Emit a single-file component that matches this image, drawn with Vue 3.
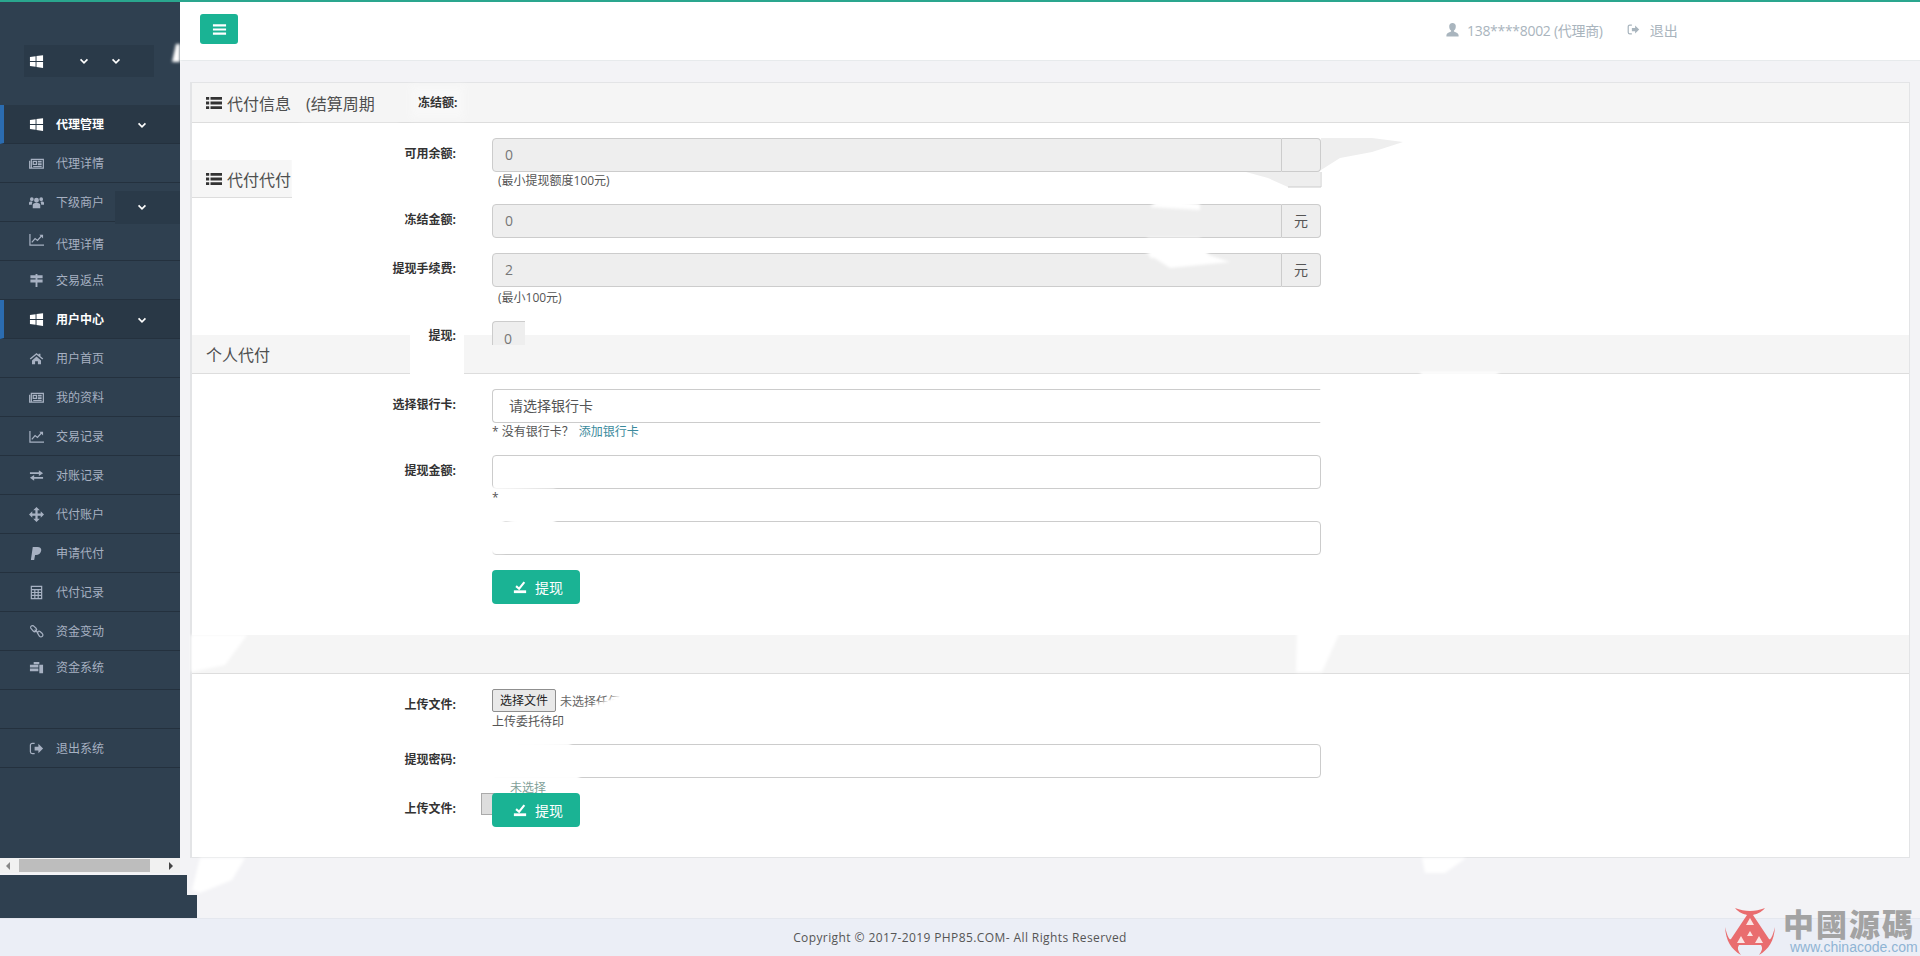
<script setup>
const icons = {
  windows: { f: 'M1 3.2 7 2.3V7.5H1Z M8 2.2 15 1.2V7.5H8Z M1 8.5H7V13.7L1 12.8Z M8 8.5H15V14.8L8 13.8Z' },
  news: { s: 'M2.5 3.5H15.3V13H2.5Z M.7 5V13H2.5 M4.5 5.7H8V9H4.5Z M9.5 5.7H13.5M9.5 7.5H13.5M9.5 9.3H13.5M4.5 11.2H13.5' },
  users: { f: 'M8 3a2.6 2.6 0 1 1 0 5.2A2.6 2.6 0 0 1 8 3Z M3 2.5a2 2 0 1 1 0 4 2 2 0 0 1 0-4Z M13 2.5a2 2 0 1 1 0 4 2 2 0 0 1 0-4Z M4 14V10.5C4 9 5.5 8.5 8 8.5s4 .5 4 2V14Z M0 10.5V8.5C0 7.5 1 7 3 7l.8.4C3.2 8 3 9.3 3 10.5Z M16 10.5V8.5C16 7.5 15 7 13 7l-.8.4c.6.6.8 1.9.8 3.1Z' },
  chart: { s: 'M1 2V14H16 M3 11 6.5 7 9 9 14 3.5', f: 'M11 3H15V7Z' },
  signs: { f: 'M7 1h2v1.5h5.5v3H9V7h5.5v3H9v5H7v-5H1.5V7H7V5.5H1.5v-3H7Z' },
  home: { f: 'M8 2 .8 8l1 1.1L8 4l6.2 5.1 1-1.1-3-2.5V3h-2v.9Z M3.2 10 8 5.8l4.8 4.2v4H9.5v-3h-3v3H3.2Z' },
  swap: { f: 'M1 4.5h9.5v-2L15 5.5l-4.5 3v-2H1Z M15 9.5H5.5v-2L1 10.5l4.5 3v-2H15Z' },
  arrows: { f: 'M8 0 11.5 3.5H9.2V6.800H12.5V4.5L16 8l-3.5 3.5V9.200H9.2V12.5H11.5L8 16 4.5 12.5H6.800V9.200H3.5V11.5L0 8l3.5-3.5V6.800H6.800V3.5H4.5Z' },
  paypal: { f: 'M4 1h5c3 0 4.5 1.5 4 4-.5 3-3 4.5-5.5 4.5H6.5L5.5 15H2Z' },
  calc: { s: 'M2.5 1.5h11v13h-11Z M2.5 5h11 M2.5 8h11 M2.5 11h11 M6.2 5v9 M9.8 5v9' },
  link: { s: 'M1.800 4.300a2 2 0 0 1 3-2.300l2.700 2.500a2 2 0 0 1-3 3Z M8.800 9.300a2 2 0 0 1 3-1.300l2.400 2.200a2 2 0 0 1-3 3Z M6 6l4 4' },
  bank: { f: 'M5 2h6v2.500H5Z M1 5h9v3H1Z M1 9h9v3H1Z M11 5h4v9h-4Z' },
  out: { s: 'M6 2.5H3.5a2 2 0 0 0-2 2v7a2 2 0 0 0 2 2H6', f: 'M6 6h4V3l5 5-5 5v-3H6Z' },
  user: { f: 'M8 1a3.5 3.5 0 0 1 3.5 4c0 2-1 3.5-2 4v1c2.5 1 5 2 5 4v1.5H1.5V14c0-2 2.5-3 5-4V9c-1-.5-2-2-2-4A3.5 3.5 0 0 1 8 1Z' },
  list: { f: 'M0 2h3.200v2.800H0Z M4.5 2H16v2.800H4.5Z M0 6.600h3.200v2.800H0Z M4.5 6.600H16v2.800H4.5Z M0 11.200h3.200V14H0Z M4.5 11.200H16V14H4.5Z' },
  bars: { f: 'M1 2.5h14v2.200H1Z M1 6.900h14v2.200H1Z M1 11.300h14v2.200H1Z' },
  check: { s: 'M3.5 7 7 10 13 2.5', f: 'M1 11.800h14V15H1Z' },
  chevron: { s: 'M2.5 5.5 8 11l5.5-5.500' }
}

const menu = [
  { t: '代理管理', i: 'windows', head: true, arrow: true },
  { t: '代理详情', i: 'news' },
  { t: '下级商户', i: 'users', arrow: true, patch: true },
  { t: '代理详情', i: 'chart', cls: 'down' },
  { t: '交易返点', i: 'signs' },
  { t: '用户中心', i: 'windows', head: true, arrow: true },
  { t: '用户首页', i: 'home' },
  { t: '我的资料', i: 'news' },
  { t: '交易记录', i: 'chart' },
  { t: '对账记录', i: 'swap' },
  { t: '代付账户', i: 'arrows' },
  { t: '申请代付', i: 'paypal' },
  { t: '代付记录', i: 'calc' },
  { t: '资金变动', i: 'link' },
  { t: '资金系统', i: 'bank', cls: 'up' },
  { t: '', i: '' },
  { t: '退出系统', i: 'out' }
]
</script>

<template>
  <div class="page">
    <div class="topline"></div>
    <div class="top">
      <aside class="side">
        <nav class="nav">
          <div class="brand">
            <div class="brand-box">
              <svg class="ico brand-ico" viewBox="0 0 16 16"><path :d="icons.windows.f" fill="#fff" /></svg>
              <svg class="chev first" viewBox="0 0 16 16"><path :d="icons.chevron.s" /></svg>
              <svg class="chev" viewBox="0 0 16 16"><path :d="icons.chevron.s" /></svg>
            </div>
          </div>
          <div
            v-for="(m, n) in menu"
            :key="n"
            class="item"
            :class="[m.cls, { head: m.head, patch: m.patch }]"
          >
            <svg v-if="m.i" class="ico" viewBox="0 0 16 16">
              <path v-if="icons[m.i].f" :d="icons[m.i].f" class="fill" />
              <path v-if="icons[m.i].s" :d="icons[m.i].s" class="line" />
            </svg>
            <span class="item-text">{{ m.t }}</span>
            <svg v-if="m.arrow" class="chev end" viewBox="0 0 16 16"><path :d="icons.chevron.s" /></svg>
          </div>
        </nav>
        <div class="hscroll">
          <span class="arrow left"></span>
          <span class="thumb"></span>
          <span class="arrow right"></span>
        </div>
        <div class="foot-a"></div>
        <div class="foot-b"></div>
      </aside>

      <main class="main">
        <header class="bar">
          <button class="toggle" type="button">
            <svg class="bars" viewBox="0 0 16 16"><path :d="icons.bars.f" fill="#fff" /></svg>
          </button>
          <div class="account">
            <svg class="acc-ico" viewBox="0 0 16 16"><path :d="icons.user.f" fill="#a9b5be" /></svg>
            <span class="acc-name">138****8002 (代理商)</span>
            <svg class="acc-ico out" viewBox="0 0 16 16">
              <path :d="icons.out.s" fill="none" stroke="#a9b5be" stroke-width="1.500" />
              <path :d="icons.out.f" fill="#a9b5be" />
            </svg>
            <span class="acc-out">退出</span>
          </div>
        </header>

        <div class="content">
          <section class="panel">
            <div class="heading">
              <svg class="list" viewBox="0 0 16 16"><path :d="icons.list.f" fill="#333" /></svg>
              <span>代付信息</span>
              <span class="cycle">(结算周期</span>
              <b class="frozen">冻结额:</b>
            </div>

            <div class="patch-title">
              <svg class="list" viewBox="0 0 16 16"><path :d="icons.list.f" fill="#333" /></svg>
              <span>代付代付</span>
            </div>

            <div class="body first-body">
              <div class="row">
                <label class="lab">可用余额:</label>
                <div class="field">
                  <div class="group"><div class="input off">0</div><div class="addon"></div></div>
                  <p class="help indent">(最小提现额度100元)</p>
                </div>
              </div>
              <div class="row">
                <label class="lab">冻结金额:</label>
                <div class="field">
                  <div class="group"><div class="input off">0</div><div class="addon">元</div></div>
                </div>
              </div>
              <div class="row">
                <label class="lab">提现手续费:</label>
                <div class="field">
                  <div class="group"><div class="input off">2</div><div class="addon">元</div></div>
                  <p class="help indent low">(最小100元)</p>
                </div>
              </div>
              <div class="row stub">
                <label class="lab halo">提现:</label>
                <div class="field"><div class="input off short">0</div></div>
              </div>
            </div>

            <div class="heading second">
              <span>个人代付</span>
              <i class="gap"></i>
            </div>

            <div class="body">
              <div class="row">
                <label class="lab">选择银行卡:</label>
                <div class="field">
                  <div class="input select">请选择银行卡</div>
                  <p class="help">* 没有银行卡？ <a class="add">添加银行卡</a></p>
                </div>
              </div>
              <div class="row">
                <label class="lab">提现金额:</label>
                <div class="field">
                  <div class="input"></div>
                  <p class="help star">*</p>
                </div>
              </div>
              <div class="row">
                <span class="lab"></span>
                <div class="field"><div class="input"></div></div>
              </div>
              <div class="row final">
                <span class="lab"></span>
                <div class="field">
                  <button class="submit" type="button">
                    <svg class="chk" viewBox="0 0 16 16">
                      <path :d="icons.check.s" fill="none" stroke="#fff" stroke-width="2.400" />
                      <path :d="icons.check.f" fill="#fff" />
                    </svg>
                    提现
                  </button>
                </div>
              </div>
            </div>

            <div class="heading third"></div>

            <div class="body last">
              <div class="row file-row">
                <label class="lab">上传文件:</label>
                <div class="field">
                  <div class="file"><span class="file-btn">选择文件</span><span class="file-none">未选择任何</span></div>
                  <p class="help upload">上传委托待印</p>
                </div>
              </div>
              <div class="row">
                <label class="lab">提现密码:</label>
                <div class="field"><div class="input"></div></div>
              </div>
              <div class="row final">
                <label class="lab">上传文件:</label>
                <div class="field">
                  <span class="ghost-btn"></span>
                  <span class="ghost-text">未选择</span>
                  <button class="submit" type="button">
                    <svg class="chk" viewBox="0 0 16 16">
                      <path :d="icons.check.s" fill="none" stroke="#fff" stroke-width="2.400" />
                      <path :d="icons.check.f" fill="#fff" />
                    </svg>
                    提现
                  </button>
                </div>
              </div>
            </div>
          </section>
        </div>
      </main>
    </div>

    <footer class="foot">Copyright © 2017-2019 PHP85.COM- All Rights Reserved</footer>

    <svg class="retouch" viewBox="0 0 1920 956" aria-hidden="true">
      <g fill="#fff" filter="url(#soft)">
        <path d="M176 44 180 44 180 62 172 62Z" />
        <path d="M300 124 400 124 340 165 292 196 292 160Z" />
        <path d="M1160 198 1200 204 1200 210 1150 207Z" />
        <path d="M1147 238 1200 238 1210 258 1150 258Z" />
        <path d="M1145 252 1200 252 1230 262 1170 268Z" />
        <path d="M492 487 555 489 555 540 504 520 504 553 484 553 484 500Z" />
        <path d="M570 290 660 290 620 312 572 310Z" />
        <path d="M484 740 570 743 580 780 484 780Z" />
        <path d="M1420 372 1500 372 1480 392 1425 392Z" />
        <path d="M191 635 247 635 225 665 191 672Z" />
        <path d="M1297 632 1340 632 1322 672 1296 672Z" />
        <path d="M625 692 690 695 720 715 700 735 570 732 570 716Z" />
        <path d="M200 858 245 858 232 880 200 893 192 890Z" />
        <path d="M1422 858 1466 858 1445 873 1425 873Z" />
      </g>
      <path d="M1246 172 1320 172V187H1288L1268 178ZM1321 138H1372L1403 142 1372 152 1340 158 1321 170Z" fill="#eee" />
      <path d="M1288 187H1321V172" fill="none" stroke="#ccc" />
      <defs>
        <filter id="soft" x="-20%" y="-20%" width="140%" height="140%"><feGaussianBlur stdDeviation="1.500" /></filter>
      </defs>
    </svg>

    <div class="mark">
      <svg class="mark-logo" viewBox="0 0 50 48">
        <path d="M10 1C15 3 20 4 25 4S35 3 40 1C36 6 31 7 28 8L44 32C45 33 47 32 50 20 49 34 44 42 34 48 37 44 38 41 36 38H14C12 41 13 44 16 48 6 42 1 34 0 20 3 32 5 33 6 32L22 8C19 7 14 6 10 1Z" fill="#e96d6f" />
        <path d="M25 11 29 18H21Z M25 24 28 29H22Z M16 29 20 36H12Z M34 29 38 36H30Z" fill="#fbe4e4" />
      </svg>
      <div class="mark-words">
        <div class="mark-cn">中國源碼</div>
        <div class="mark-url">www.chinacode.com</div>
      </div>
    </div>
  </div>
</template>

<style scoped>
.page {
  position: relative;
  width: 1920px;
  height: 956px;
  overflow: hidden;
  display: flex;
  flex-direction: column;
  background: #f3f3f6;
  font-family: "Open Sans", "Noto Sans CJK SC", sans-serif;
  color: #555;
}
.topline { height: 2px; background: #2aa68e; flex: none; }
.top { display: flex; height: 916px; flex: none; }

/* sidebar */
.side { width: 180px; flex: none; position: relative; z-index: 1; }
.nav { height: 856px; background: #2f4050; overflow: hidden; }
.brand { height: 103px; padding-top: 43px; box-sizing: border-box; }
.brand-box {
  width: 130px;
  height: 32px;
  margin-left: 24px;
  background: #2a3a49;
  display: flex;
  align-items: center;
}
.brand-ico { margin-left: 5px; }
.chev { width: 10px; height: 10px; fill: none; stroke: #fff; stroke-width: 2.600; flex: none; }
.chev.first { margin-left: 35px; margin-right: 22px; }
.item {
  height: 39px;
  box-sizing: border-box;
  display: flex;
  align-items: center;
  padding-left: 29px;
  border-bottom: 1px solid #24313e;
  color: #a7b1c2;
  font-size: 12px;
  position: relative;
}
.item.down { padding-top: 6px; }
.item.up { padding-bottom: 6px; }
.item.down .ico { margin-top: -10px; }
.item.head {
  background: #293846;
  color: #fff;
  font-weight: 600;
  border-left: 4px solid #2b6cb0;
  padding-left: 25px;
}
.item.patch::after {
  content: "";
  position: absolute;
  right: 0;
  top: 8px;
  width: 65px;
  height: 33px;
  background: #2a3a49;
}
.ico { width: 15px; height: 15px; flex: none; }
.fill { fill: #a7b1c2; }
.head .fill { fill: #fff; }
.line { fill: none; stroke: #a7b1c2; stroke-width: 1.300; }
.item-text { margin-left: 12px; white-space: nowrap; }
.chev.end { position: absolute; left: 137px; top: 15px; z-index: 1; }
.head .chev.end { left: 133px; }
.patch .chev.end { top: 19px; }

.hscroll {
  height: 15px;
  background: #f1f1f1;
  position: relative;
  display: flex;
  align-items: center;
}
.thumb { width: 131px; height: 13px; margin-left: 3px; background: #bdbdbd; }
.arrow { width: 0; height: 0; border-style: solid; border-color: transparent; margin: 0 6px; }
.arrow.left { border-width: 4px 4px 4px 0; border-right-color: #888; margin-left: 6px; }
.arrow.right { border-width: 4px 0 4px 4px; border-left-color: #444; margin-left: 19px; }
.foot-a { width: 187px; height: 20px; margin-top: 2px; background: #2f4050; }
.foot-b { width: 197px; height: 23px; background: #2f4050; }

/* header */
.main { flex: 1; min-width: 0; }
.bar {
  height: 59px;
  box-sizing: border-box;
  background: #fff;
  border-bottom: 1px solid #e7eaec;
  display: flex;
  justify-content: space-between;
  padding: 12px 0 0 20px;
}
.toggle {
  width: 38px;
  height: 30px;
  border: 0;
  border-radius: 3px;
  background: #1ab394;
  display: flex;
  align-items: center;
  justify-content: center;
  padding: 0;
}
.bars { width: 15px; height: 15px; }
.account {
  width: 475px;
  height: 31px;
  display: flex;
  align-items: center;
  color: #a9b4bd;
  font-size: 14px;
  letter-spacing: -.3px;
}
.acc-ico { width: 15px; height: 15px; flex: none; }
.acc-name { margin-left: 7px; white-space: nowrap; }
.acc-ico.out { width: 13px; height: 13px; margin-left: 24px; }
.acc-out { margin-left: 10px; letter-spacing: 0; }

/* panel */
.content { padding: 21px 10px 0; }
.panel {
  position: relative;
  height: 776px;
  box-sizing: border-box;
  background: #fff;
  border: 1px solid #e3e4e6;
  border-left-width: 2px;
}
.heading {
  height: 40px;
  box-sizing: border-box;
  background: #f5f5f5;
  border-bottom: 1px solid #ddd;
  padding-left: 14px;
  display: flex;
  align-items: center;
  font-size: 16px;
  color: #4f4f4f;
  position: relative;
}
.list { width: 16px; height: 16px; margin-right: 5px; flex: none; }
.cycle { margin-left: 15px; }
.frozen {
  position: absolute;
  left: 226px;
  top: 10px;
  font-size: 12px;
  color: #333;
  background: #f8f8f8;
  box-shadow: 0 0 7px 7px #f8f8f8;
}
.patch-title {
  position: absolute;
  left: 0;
  top: 77px;
  width: 100px;
  height: 38px;
  box-sizing: border-box;
  padding-left: 14px;
  background: #f6f6f6;
  border-bottom: 1px solid #ddd;
  display: flex;
  align-items: center;
  white-space: nowrap;
  font-size: 16px;
  color: #4f4f4f;
  z-index: 1;
}
.body { padding: 15px 0 31px; }
.first-body { padding-bottom: 0; }
.body.last { padding-bottom: 0; }
.row {
  display: grid;
  grid-template-columns: 264px 829px;
  column-gap: 36px;
  margin-bottom: 15px;
}
.lab {
  text-align: right;
  font-size: 12px;
  line-height: 18px;
  padding-top: 7px;
  font-weight: 700;
  color: #333;
  white-space: nowrap;
}
.input {
  height: 34px;
  box-sizing: border-box;
  border: 1px solid #ccc;
  border-radius: 4px;
  padding: 0 12px;
  font-size: 14px;
  line-height: 32px;
  color: #555;
  background: #fff;
}
.input.off { background: #eee; color: #777; }
.input.select {
  padding-left: 16px;
  color: #555;
  border-right-color: #fff;
  border-radius: 4px 0 0 4px;
}
.group { display: flex; }
.group .input { flex: 1; border-radius: 4px 0 0 4px; }
.addon {
  width: 39px;
  height: 34px;
  box-sizing: border-box;
  border: 1px solid #ccc;
  border-left: 0;
  border-radius: 0 4px 4px 0;
  background: #eee;
  text-align: center;
  font-size: 14px;
  line-height: 32px;
  color: #555;
}
.help {
  margin: 0;
  font-size: 12px;
  line-height: 17px;
  height: 17px;
  color: #555;
  white-space: nowrap;
}
.help.indent { padding-left: 6px; }
.help.low { padding-top: 2px; }
.help.star { position: relative; z-index: 3; }
.add { color: #3a8a9c; margin-left: 2px; }

.stub { height: 24px; margin-bottom: -10px; position: relative; z-index: 1; }
.lab.halo { height: 18px; padding-top: 6px; }
.input.short {
  width: 33px;
  height: 24px;
  padding: 0 0 0 11px;
  border-bottom: 0;
  border-right: 0;
  border-radius: 4px 0 0 0;
  line-height: 33px;
}
.second { height: 39px; padding-left: 14px; font-size: 16px; }
.gap {
  position: absolute;
  left: 218px;
  top: -2px;
  width: 54px;
  height: 44px;
  background: #fff;
}
.third { height: 39px; }
.file-row { margin-bottom: 15px; }
.file { display: flex; align-items: center; height: 23px; }
.file-btn {
  width: 64px;
  height: 23px;
  box-sizing: border-box;
  border: 1px solid #8f8f8f;
  border-radius: 2px;
  background: #e9e9e9;
  color: #222;
  font-size: 12px;
  line-height: 21px;
  text-align: center;
}
.file-none { margin-left: 4px; font-size: 12px; color: #666; }
.help.upload { margin-top: 1px; height: 16px; }
.final { margin-bottom: 0; }
.field { position: relative; }
.ghost-btn {
  position: absolute;
  left: -11px;
  top: 0;
  width: 14px;
  height: 22px;
  background: #ddd;
  border: 1px solid #aaa;
  box-sizing: border-box;
}
.ghost-text {
  position: absolute;
  left: 18px;
  top: -12px;
  font-size: 12px;
  line-height: 14px;
  color: #7f9f98;
}
.submit {
  position: relative;
  width: 88px;
  height: 34px;
  border: 0;
  border-radius: 4px;
  background: #1ab394;
  color: #fff;
  font: inherit;
  font-size: 14px;
  display: flex;
  align-items: center;
  padding: 0 0 0 21px;
}
.chk { width: 14px; height: 14px; margin-right: 8px; flex: none; }

/* footer */
.foot {
  height: 38px;
  flex: none;
  box-sizing: border-box;
  background: #ebeef6;
  border-top: 1px solid #e4e7ee;
  text-align: center;
  font-size: 12px;
  line-height: 38px;
  color: #555;
  letter-spacing: .4px;
}

/* retouched areas lying over the page */
.retouch {
  position: absolute;
  left: 0;
  top: 0;
  width: 1920px;
  height: 956px;
  pointer-events: none;
  z-index: 2;
}

/* watermark */
.mark {
  position: absolute;
  left: 1725px;
  top: 907px;
  display: flex;
  z-index: 3;
}
.mark-logo { width: 50px; height: 48px; flex: none; }
.mark-words { margin-left: 8px; width: 136px; }
.mark-cn {
  font-family: "Noto Sans CJK TC", sans-serif;
  font-weight: 900;
  font-size: 31px;
  line-height: 32px;
  letter-spacing: 2px;
  color: #a3a3a3;
  white-space: nowrap;
  height: 32px;
  overflow: visible;
}
.mark-url {
  font-family: "Liberation Sans", sans-serif;
  font-size: 14px;
  line-height: 16px;
  color: #8fb4d4;
  padding-left: 7px;
  white-space: nowrap;
}
</style>

<style>
html, body { margin: 0; padding: 0; }
</style>
